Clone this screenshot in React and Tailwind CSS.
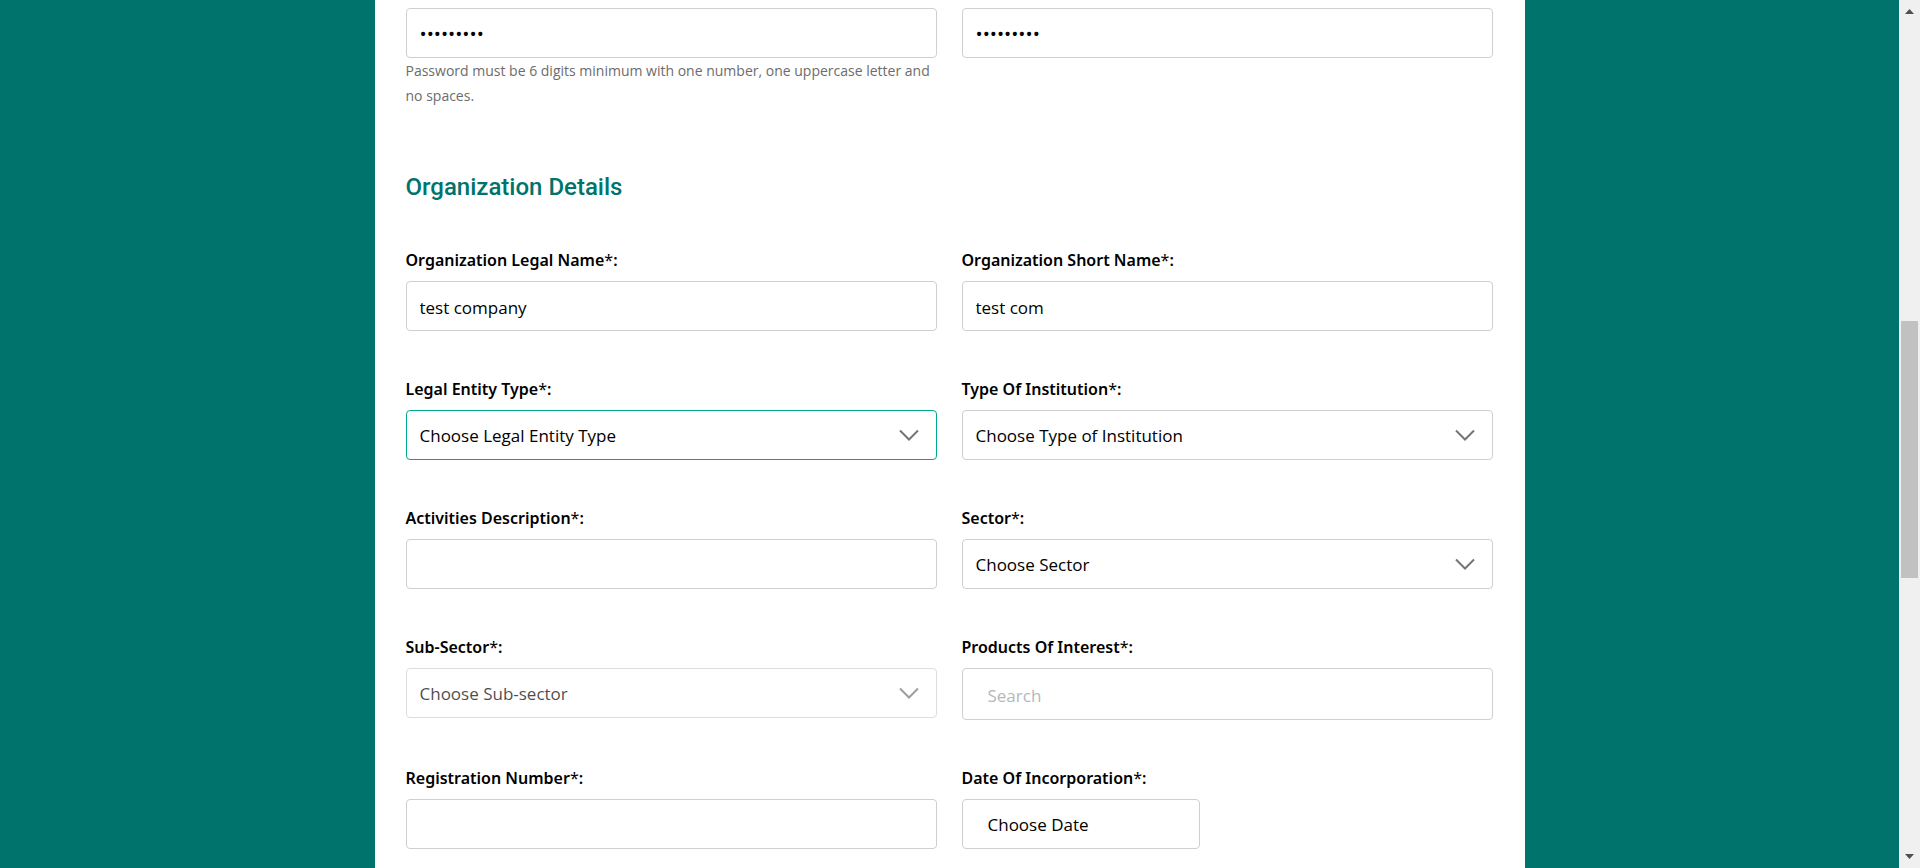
import React from "react";

const control =
  "block h-[50px] w-full rounded-[4px] border bg-white pt-0.5 text-black outline-none";

function Field({ id, label, children }) {
  return (
    <div>
      <label
        htmlFor={id}
        className="mb-[9px] block font-['Noto_Sans',sans-serif] text-base leading-6 font-semibold text-black"
      >
        {label}
        <span className="font-normal">*</span>:
      </label>
      {children}
    </div>
  );
}

function TextField({ id, label, value }) {
  return (
    <Field id={id} label={label}>
      <input id={id} type="text" defaultValue={value} className={`${control} border-[#cfcfcf] px-[13px] text-[17px]`} />
    </Field>
  );
}

function SelectField({ id, label, option, disabled, active }) {
  return (
    <Field id={id} label={label}>
      <div className={`relative ${disabled ? "opacity-70" : ""}`}>
        <select
          id={id}
          disabled={disabled}
          className={`${control} appearance-none px-[13px] text-[17px] ${active ? "border-[#00a78e]" : "border-[#cfcfcf]"}`}
        >
          <option>{option}</option>
        </select>
        <svg
          aria-hidden="true"
          viewBox="0 0 20 12"
          className="pointer-events-none absolute top-[19px] right-[18px] h-3 w-5"
          fill="none"
          stroke="#757575"
          strokeWidth="2"
        >
          <path d="M1 1.5L10 10.5L19 1.5" />
        </svg>
      </div>
    </Field>
  );
}

function PasswordField({ id, label, children }) {
  return (
    <div>
      <input
        id={id}
        type="password"
        aria-label={label}
        defaultValue="Secret123"
        className={`${control} border-[#cfcfcf] px-[13px] text-[19px]`}
      />
      {children}
    </div>
  );
}

function Scrollbar() {
  return (
    <div aria-hidden="true" className="sticky top-0 flex h-screen w-[21px] shrink-0 flex-col items-center bg-[#f0f0f0] py-[9px]">
      <svg viewBox="0 0 9 5" className="h-[5px] w-[9px]" fill="#505050">
        <path d="M4.5 0L9 5H0z" />
      </svg>
      <div className="w-[17px] flex-[307]" />
      <div className="w-[17px] flex-[257] bg-[#c1c1c1]" />
      <div className="w-[17px] flex-[276]" />
      <svg viewBox="0 0 9 5" className="h-[5px] w-[9px]" fill="#505050">
        <path d="M0 0H9L4.5 5z" />
      </svg>
    </div>
  );
}

export default function App() {
  return (
    <div className="flex min-h-screen bg-[#00746c] font-['Open_Sans','Noto_Sans',sans-serif]">
      <main className="flex flex-1 justify-center">
        <form className="w-full max-w-[1150px] bg-white pt-2 pr-8 pb-4 pl-[31px]">
          <div className="grid grid-cols-2 gap-x-[25px]">
            <PasswordField id="password" label="Password">
              <p className="text-sm leading-[25px] text-[#6c6c6c]">
                Password must be 6 digits minimum with one number, one uppercase letter and no spaces.
              </p>
            </PasswordField>
            <PasswordField id="confirm" label="Confirm password" />
          </div>

          <h2 className="mt-[63px] font-[Roboto,sans-serif] text-2xl leading-8 font-medium text-[#00746c]">
            Organization Details
          </h2>

          <div className="mt-[45px] grid grid-cols-2 gap-x-[25px] gap-y-[46px]">
            <TextField id="legal-name" label="Organization Legal Name" value="test company" />
            <TextField id="short-name" label="Organization Short Name" value="test com" />
            <SelectField id="entity" label="Legal Entity Type" option="Choose Legal Entity Type" active />
            <SelectField id="institution" label="Type Of Institution" option="Choose Type of Institution" />
            <TextField id="activities" label="Activities Description" />
            <SelectField id="sector" label="Sector" option="Choose Sector" />
            <SelectField id="sub-sector" label="Sub-Sector" option="Choose Sub-sector" disabled />
            <Field id="products" label="Products Of Interest">
              <div className="rounded-[4px] border border-[#cfcfcf]">
                <input
                  id="products"
                  type="text"
                  placeholder="Search"
                  className="block h-[50px] w-full bg-transparent px-[25px] pt-0.5 text-[17px] outline-none placeholder:text-[#b4b8bc]"
                />
              </div>
            </Field>
            <TextField id="registration" label="Registration Number" />
            <Field id="date" label="Date Of Incorporation">
              <button
                id="date"
                type="button"
                className="block h-[50px] w-[238px] rounded-[4px] border border-[#cfcfcf] bg-white px-[25px] pt-0.5 text-left text-[17px] text-black"
              >
                Choose Date
              </button>
            </Field>
          </div>
        </form>
      </main>
      <Scrollbar />
    </div>
  );
}
